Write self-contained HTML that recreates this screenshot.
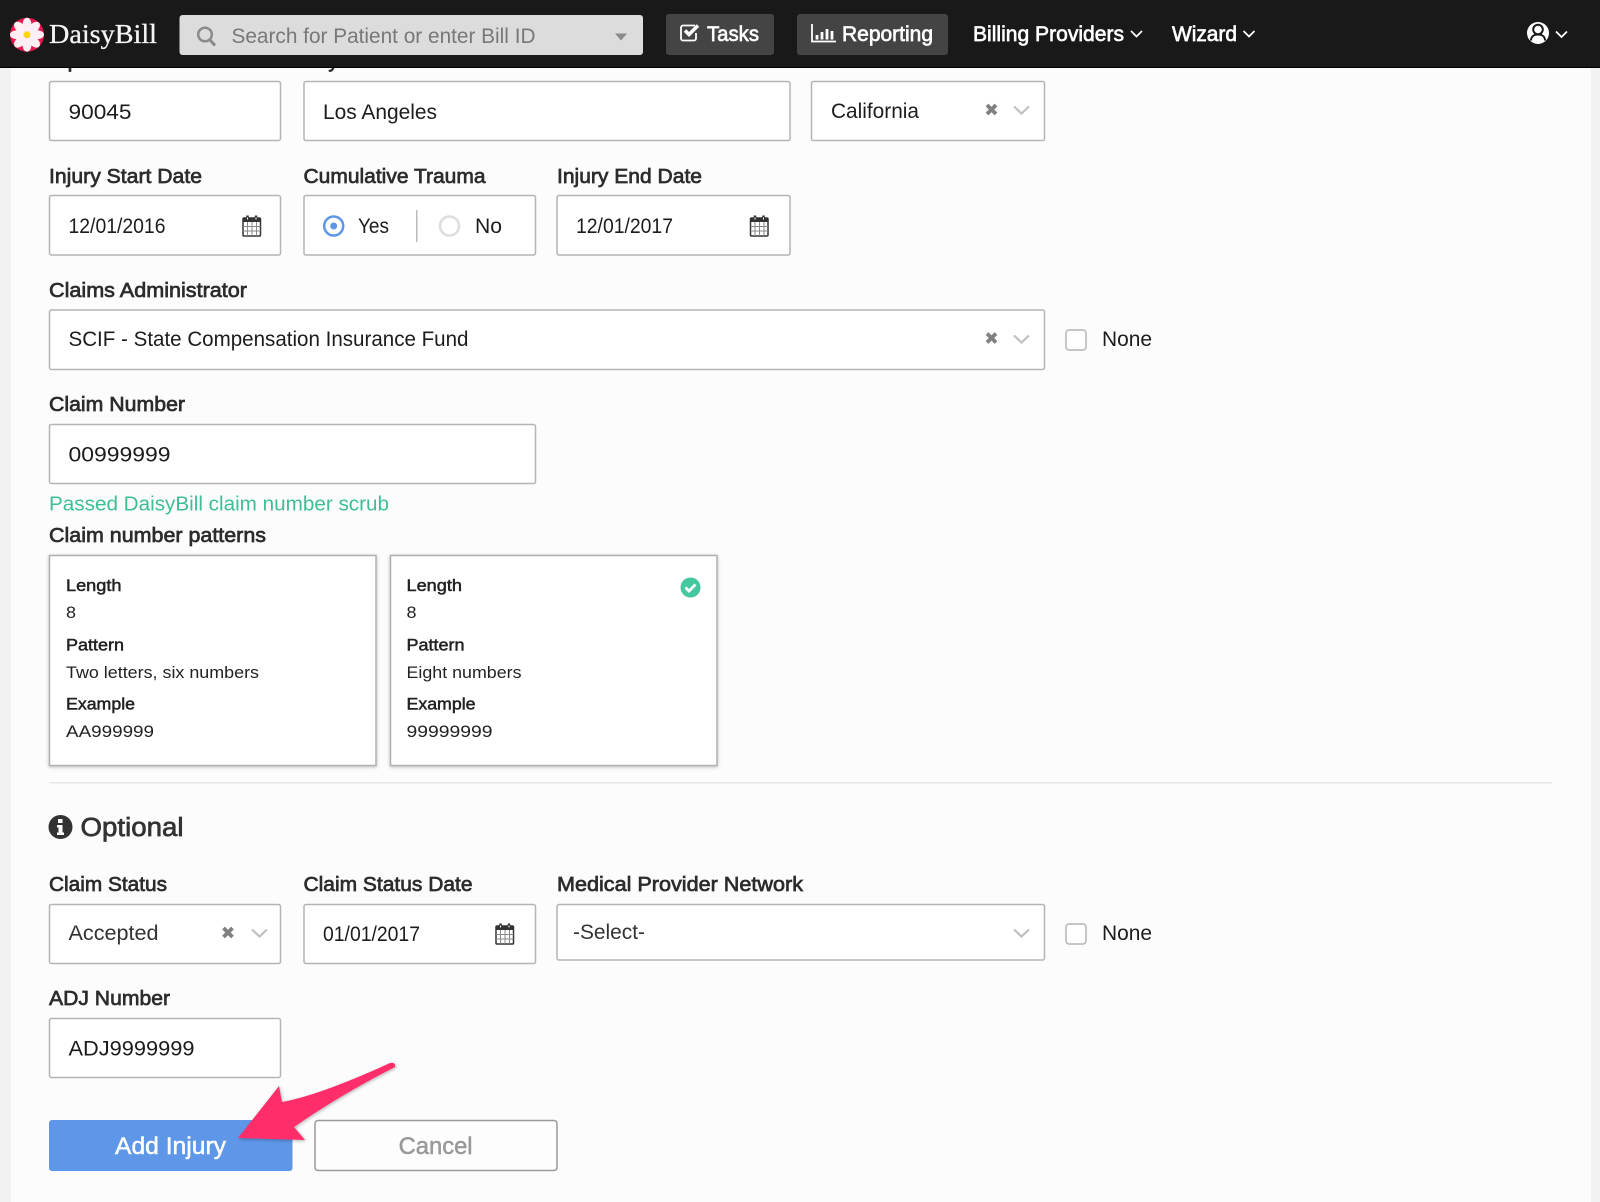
<!DOCTYPE html>
<html lang="en"><head><meta charset="utf-8"><title>DaisyBill - Add Injury</title>
<style>
html,body{margin:0;padding:0;background:#fcfcfc;width:1600px;height:1202px;overflow:hidden}
svg{display:block;font-family:"Liberation Sans",Arial,sans-serif}
.v{font-size:21px;fill:#1c1c1c}
.l{font-size:20.5px;fill:#2c2c2c;stroke:#2c2c2c;stroke-width:.7}
.c{font-size:17px;fill:#222}
.cb{font-size:17px;fill:#222;stroke:#222;stroke-width:.5}
.n{font-size:21px;fill:#fff;stroke:#fff;stroke-width:.65}
.f{fill:#fff;stroke:#b4b4b4;stroke-width:1.5}
</style></head><body>
<svg width="1600" height="1202" viewBox="0 0 1600 1202" xmlns="http://www.w3.org/2000/svg">
<defs>
<filter id="sh" x="-5%" y="-5%" width="110%" height="110%"><feDropShadow dx="0" dy="1" stdDeviation="1.5" flood-color="#000" flood-opacity=".25"/></filter>
<filter id="ash" x="-10%" y="-10%" width="120%" height="120%"><feDropShadow dx="1" dy="1" stdDeviation="1.5" flood-color="#000" flood-opacity=".3"/></filter>
<g id="cal"><rect x="1" y="3" width="17.500" height="18" rx="1" fill="#fff" stroke="#333" stroke-width="1.500"/><rect x="1" y="3" width="17.500" height="4" fill="#333"/><path d="M1 11.500h17.500M1 16h17.500M5.500 7v14M10 7v14M14.500 7v14" stroke="#888" stroke-width="1" fill="none"/><path d="M5.500 0.500v5M14 0.500v5" stroke="#333" stroke-width="2.500"/><path d="M5.500 2.500v2M14 2.500v2" stroke="#fff" stroke-width="1"/></g>
<path id="xm" d="M-4.500-4.500L4.500 4.500M4.500-4.500L-4.500 4.500" stroke="#808080" stroke-width="3.800" fill="none"/>
<path id="ch" d="M-7.500-3.500L0 3.500L7.500-3.500" stroke="#c0c0c0" stroke-width="2.200" fill="none"/>
<path id="nch" d="M-5.500-3L0 2.500L5.500-3" stroke="#fff" stroke-width="1.700" fill="none"/>
</defs>

<rect width="1600" height="1202" fill="#fcfcfc"/>
<rect width="11" height="1202" fill="#f2f2f2"/>
<rect x="1591" width="9" height="1202" fill="#f2f2f2"/>

<text class="l" x="49" y="67.500" textLength="90" lengthAdjust="spacingAndGlyphs">Zip Code</text>
<text class="l" x="303.500" y="67.500" textLength="35" lengthAdjust="spacingAndGlyphs">City</text>
<text class="l" x="811" y="67.500" textLength="49" lengthAdjust="spacingAndGlyphs">State</text>

<rect class="f" x="49.500" y="81.500" width="231" height="59" rx="2"/>
<text class="v" x="68.500" y="119" textLength="63" lengthAdjust="spacingAndGlyphs">90045</text>
<rect class="f" x="304" y="81.500" width="486" height="59" rx="2"/>
<text class="v" x="323" y="119" textLength="114" lengthAdjust="spacingAndGlyphs">Los Angeles</text>
<rect class="f" x="811.500" y="81.500" width="233" height="59" rx="2"/>
<text class="v" x="831" y="118" textLength="88" lengthAdjust="spacingAndGlyphs">California</text>
<use href="#xm" x="991.500" y="109.500"/><use href="#ch" x="1021.500" y="110"/>

<text class="l" x="49" y="183" textLength="153" lengthAdjust="spacingAndGlyphs">Injury Start Date</text>
<text class="l" x="303.500" y="183" textLength="182" lengthAdjust="spacingAndGlyphs">Cumulative Trauma</text>
<text class="l" x="557" y="183" textLength="145" lengthAdjust="spacingAndGlyphs">Injury End Date</text>

<rect class="f" x="49.500" y="195.500" width="231" height="59.500" rx="2"/>
<text class="v" x="68.500" y="233" textLength="97" lengthAdjust="spacingAndGlyphs">12/01/2016</text>
<use href="#cal" x="242" y="215"/>
<rect class="f" x="304" y="195.500" width="231.500" height="59.500" rx="2"/>
<circle cx="333.700" cy="226" r="9.500" fill="#fff" stroke="#5e96e6" stroke-width="2.500"/><circle cx="333.700" cy="226" r="3.500" fill="#5e96e6"/>
<text class="v" x="358" y="233" textLength="31" lengthAdjust="spacingAndGlyphs">Yes</text>
<rect x="416" y="210" width="1.500" height="32" fill="#bbb"/>
<circle cx="449.500" cy="226" r="9.500" fill="#fff" stroke="#ddd" stroke-width="2.500"/>
<text class="v" x="475" y="233" textLength="27" lengthAdjust="spacingAndGlyphs">No</text>
<rect class="f" x="557" y="195.500" width="233" height="59.500" rx="2"/>
<text class="v" x="576" y="233" textLength="97" lengthAdjust="spacingAndGlyphs">12/01/2017</text>
<use href="#cal" x="749.500" y="215"/>

<text class="l" x="49" y="297" textLength="198" lengthAdjust="spacingAndGlyphs">Claims Administrator</text>
<rect class="f" x="49.500" y="310" width="995" height="59.500" rx="2"/>
<text class="v" x="68.500" y="346" textLength="400" lengthAdjust="spacingAndGlyphs">SCIF - State Compensation Insurance Fund</text>
<use href="#xm" x="991.500" y="338"/><use href="#ch" x="1021.500" y="339"/>
<rect x="1066" y="330" width="20" height="20" rx="3" fill="#fff" stroke="#b4b4b4" stroke-width="1.500"/>
<text class="v" x="1102" y="346" textLength="50" lengthAdjust="spacingAndGlyphs">None</text>

<text class="l" x="49" y="411" textLength="136" lengthAdjust="spacingAndGlyphs">Claim Number</text>
<rect class="f" x="49.500" y="424.500" width="486" height="59" rx="2"/>
<text class="v" x="68.500" y="461.500" textLength="102" lengthAdjust="spacingAndGlyphs">00999999</text>
<text x="49" y="510.500" font-size="20.500" fill="#3dbf95" textLength="340" lengthAdjust="spacingAndGlyphs">Passed DaisyBill claim number scrub</text>
<text class="l" x="49" y="542" textLength="217" lengthAdjust="spacingAndGlyphs">Claim number patterns</text>

<rect x="49.500" y="555.500" width="326.500" height="210" fill="#fff" stroke="#b0b0b0" stroke-width="1.500" filter="url(#sh)"/>
<text class="cb" x="66" y="591" textLength="55.500" lengthAdjust="spacingAndGlyphs">Length</text>
<text class="c" x="66" y="618" textLength="10" lengthAdjust="spacingAndGlyphs">8</text>
<text class="cb" x="66" y="650.500" textLength="58" lengthAdjust="spacingAndGlyphs">Pattern</text>
<text class="c" x="66" y="678" textLength="193" lengthAdjust="spacingAndGlyphs">Two letters, six numbers</text>
<text class="cb" x="66" y="709.500" textLength="69" lengthAdjust="spacingAndGlyphs">Example</text>
<text class="c" x="66" y="737" textLength="88" lengthAdjust="spacingAndGlyphs">AA999999</text>

<rect x="390.500" y="555.500" width="326.500" height="210" fill="#fff" stroke="#b0b0b0" stroke-width="1.500" filter="url(#sh)"/>
<text class="cb" x="406.500" y="591" textLength="55.500" lengthAdjust="spacingAndGlyphs">Length</text>
<text class="c" x="406.500" y="618" textLength="10" lengthAdjust="spacingAndGlyphs">8</text>
<text class="cb" x="406.500" y="650.500" textLength="58" lengthAdjust="spacingAndGlyphs">Pattern</text>
<text class="c" x="406.500" y="678" textLength="115" lengthAdjust="spacingAndGlyphs">Eight numbers</text>
<text class="cb" x="406.500" y="709.500" textLength="69" lengthAdjust="spacingAndGlyphs">Example</text>
<text class="c" x="406.500" y="737" textLength="86" lengthAdjust="spacingAndGlyphs">99999999</text>
<circle cx="690.500" cy="587.500" r="10" fill="#45c79f"/><path d="M685.500 587.500l3.500 3.500l6.500-6.500" stroke="#fff" stroke-width="2.800" fill="none"/>

<rect x="49" y="782" width="1503" height="1.500" fill="#e8e8e8"/>

<circle cx="60.500" cy="827" r="12" fill="#333"/>
<path d="M58 819h4.500v4H58zM57 825h5.500v7.500h1.500v2.500h-7v-2.500h1.500v-5H57z" fill="#fff"/>
<text x="80.500" y="836" font-size="25.500" fill="#333" stroke="#333" stroke-width=".7" textLength="103" lengthAdjust="spacingAndGlyphs">Optional</text>

<text class="l" x="49" y="891" textLength="118" lengthAdjust="spacingAndGlyphs">Claim Status</text>
<text class="l" x="303.500" y="891" textLength="169" lengthAdjust="spacingAndGlyphs">Claim Status Date</text>
<text class="l" x="557" y="891" textLength="246" lengthAdjust="spacingAndGlyphs">Medical Provider Network</text>

<rect class="f" x="49.500" y="904.500" width="231" height="59" rx="2"/>
<text class="v" x="68.500" y="940" textLength="90" lengthAdjust="spacingAndGlyphs" style="fill:#333">Accepted</text>
<use href="#xm" x="228" y="932.500"/><use href="#ch" x="259.500" y="933"/>
<rect class="f" x="304" y="904.500" width="231.500" height="59" rx="2"/>
<text class="v" x="323" y="941" textLength="97" lengthAdjust="spacingAndGlyphs">01/01/2017</text>
<use href="#cal" x="495" y="923"/>
<rect class="f" x="557" y="904.500" width="487.500" height="55.500" rx="2"/>
<text class="v" x="573" y="939" textLength="72" lengthAdjust="spacingAndGlyphs" style="fill:#333">-Select-</text>
<use href="#ch" x="1021.500" y="933"/>
<rect x="1066" y="924" width="20" height="20" rx="3" fill="#fff" stroke="#b4b4b4" stroke-width="1.500"/>
<text class="v" x="1102" y="940" textLength="50" lengthAdjust="spacingAndGlyphs">None</text>

<text class="l" x="49" y="1005" textLength="121" lengthAdjust="spacingAndGlyphs">ADJ Number</text>
<rect class="f" x="49.500" y="1018.500" width="231" height="59" rx="2"/>
<text class="v" x="68.500" y="1055.500" textLength="126" lengthAdjust="spacingAndGlyphs">ADJ9999999</text>

<rect x="49" y="1120" width="243.500" height="51" rx="3" fill="#5e96e8"/>
<text x="115" y="1154" font-size="24" fill="#fff" textLength="111" lengthAdjust="spacingAndGlyphs" style="stroke:#fff;stroke-width:.5">Add Injury</text>
<rect x="315" y="1120.500" width="242" height="50" rx="3" fill="#fdfdfd" stroke="#999" stroke-width="1.500"/>
<text x="398.600" y="1154" font-size="24" fill="#999" textLength="74" lengthAdjust="spacingAndGlyphs" style="stroke:#999;stroke-width:.5">Cancel</text>

<path d="M279 1086L282 1102Q320 1095 390 1063Q396 1062 395 1067Q340 1095 294 1127L305 1140L238 1138Z" fill="#ff2d6b" filter="url(#ash)"/>

<!-- nav -->
<rect width="1600" height="68" fill="#191919"/>
<rect y="67" width="1600" height="1" fill="#000"/>
<circle cx="27" cy="34.700" r="17" fill="#e8174f"/>
<g fill="#fdeff3">
<ellipse cx="27" cy="24.700" rx="4.500" ry="7"/>
<ellipse cx="27" cy="24.700" rx="4.500" ry="7" transform="rotate(45 27 34.700)"/>
<ellipse cx="27" cy="24.700" rx="4.500" ry="7" transform="rotate(90 27 34.700)"/>
<ellipse cx="27" cy="24.700" rx="4.500" ry="7" transform="rotate(135 27 34.700)"/>
<ellipse cx="27" cy="24.700" rx="4.500" ry="7" transform="rotate(180 27 34.700)"/>
<ellipse cx="27" cy="24.700" rx="4.500" ry="7" transform="rotate(225 27 34.700)"/>
<ellipse cx="27" cy="24.700" rx="4.500" ry="7" transform="rotate(270 27 34.700)"/>
<ellipse cx="27" cy="24.700" rx="4.500" ry="7" transform="rotate(315 27 34.700)"/>
</g>
<circle cx="27" cy="34.700" r="3.300" fill="#ffd800"/>
<text x="49" y="43" font-size="27" fill="#f4f4f4" stroke="#f4f4f4" stroke-width=".3" textLength="108" lengthAdjust="spacingAndGlyphs" style="font-family:'Liberation Serif',serif">DaisyBill</text>

<rect x="179.500" y="15" width="463.500" height="40" rx="3" fill="#dcdcdc"/>
<circle cx="205" cy="34.500" r="6.800" fill="none" stroke="#8a8a8a" stroke-width="2.500"/><path d="M210 40l5 5.500" stroke="#8a8a8a" stroke-width="3"/>
<text x="231.500" y="43" font-size="21" fill="#787878" textLength="304" lengthAdjust="spacingAndGlyphs">Search for Patient or enter Bill ID</text>
<path d="M615 33.500h12l-6 7z" fill="#8a8a8a"/>

<rect x="666" y="14" width="108" height="41" rx="3" fill="#444"/>
<path d="M696 33v5.500a2 2 0 0 1-2 2h-11a2 2 0 0 1-2-2v-11a2 2 0 0 1 2-2h12" fill="none" stroke="#fff" stroke-width="1.800"/>
<path d="M685 30.500l4 4l9-9" fill="none" stroke="#fff" stroke-width="3.500"/>
<text class="n" x="707" y="41" textLength="52" lengthAdjust="spacingAndGlyphs">Tasks</text>

<rect x="797" y="14" width="151" height="41" rx="3" fill="#444"/>
<path d="M812 24v17.500H836" fill="none" stroke="#fff" stroke-width="1.800"/>
<path d="M817 35v4.500M822 32v7.500M827 29v10.500M832 31v8.500" fill="none" stroke="#fff" stroke-width="2.800"/>
<text class="n" x="842" y="41" textLength="91" lengthAdjust="spacingAndGlyphs">Reporting</text>

<text class="n" x="973" y="41" textLength="151" lengthAdjust="spacingAndGlyphs">Billing Providers</text>
<use href="#nch" x="1136.500" y="34"/>
<text class="n" x="1172" y="41" textLength="65" lengthAdjust="spacingAndGlyphs">Wizard</text>
<use href="#nch" x="1249" y="34"/>

<circle cx="1538" cy="33" r="11" fill="#fff"/>
<circle cx="1538" cy="29.500" r="4.800" fill="#fff" stroke="#191919" stroke-width="2"/>
<path d="M1531 40.500c0-4 3-6 7-6s7 2 7 6" fill="#fff" stroke="#191919" stroke-width="2"/>
<use href="#nch" x="1561.500" y="34.500"/>
</svg>
</body></html>
